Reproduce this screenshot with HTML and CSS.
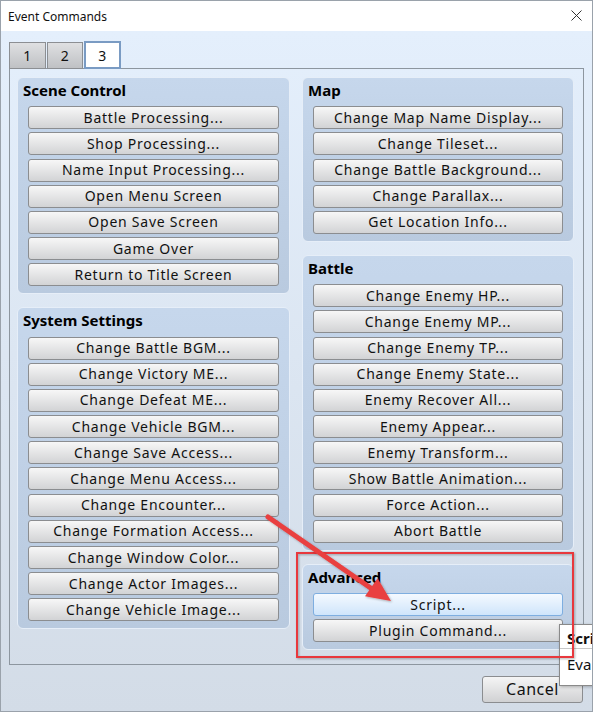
FILE: index.html
```html
<!DOCTYPE html>
<html>

<head>
    <link rel="stylesheet" href="styles.css">
</head>

<body>
    <div class="window">
        <div class="titlebar">
            <span class="title">Event Commands</span>
            <svg class="close" width="11" height="11" viewBox="0 0 11 11">
                <path d="M0.5 0.5 L10.5 10.5 M10.5 0.5 L0.5 10.5" stroke="#333" stroke-width="1" fill="none" />
            </svg>
        </div>

        <div class="client">
            <div class="tabs">
                <div class="tab">1</div>
                <div class="tab">2</div>
                <div class="tab active">3</div>
            </div>

            <div class="panel">
                <div class="column">
                    <div class="group">
                        <div class="group-title">Scene Control</div>
                        <button class="cmd">Battle Processing...</button>
                        <button class="cmd">Shop Processing...</button>
                        <button class="cmd">Name Input Processing...</button>
                        <button class="cmd">Open Menu Screen</button>
                        <button class="cmd">Open Save Screen</button>
                        <button class="cmd">Game Over</button>
                        <button class="cmd">Return to Title Screen</button>
                    </div>
                    <div class="group">
                        <div class="group-title">System Settings</div>
                        <button class="cmd">Change Battle BGM...</button>
                        <button class="cmd">Change Victory ME...</button>
                        <button class="cmd">Change Defeat ME...</button>
                        <button class="cmd">Change Vehicle BGM...</button>
                        <button class="cmd">Change Save Access...</button>
                        <button class="cmd">Change Menu Access...</button>
                        <button class="cmd">Change Encounter...</button>
                        <button class="cmd">Change Formation Access...</button>
                        <button class="cmd">Change Window Color...</button>
                        <button class="cmd">Change Actor Images...</button>
                        <button class="cmd">Change Vehicle Image...</button>
                    </div>
                </div>

                <div class="column right">
                    <div class="group">
                        <div class="group-title">Map</div>
                        <button class="cmd">Change Map Name Display...</button>
                        <button class="cmd">Change Tileset...</button>
                        <button class="cmd">Change Battle Background...</button>
                        <button class="cmd">Change Parallax...</button>
                        <button class="cmd">Get Location Info...</button>
                    </div>
                    <div class="group">
                        <div class="group-title">Battle</div>
                        <button class="cmd">Change Enemy HP...</button>
                        <button class="cmd">Change Enemy MP...</button>
                        <button class="cmd">Change Enemy TP...</button>
                        <button class="cmd">Change Enemy State...</button>
                        <button class="cmd">Enemy Recover All...</button>
                        <button class="cmd">Enemy Appear...</button>
                        <button class="cmd">Enemy Transform...</button>
                        <button class="cmd">Show Battle Animation...</button>
                        <button class="cmd">Force Action...</button>
                        <button class="cmd">Abort Battle</button>
                    </div>
                    <div class="group">
                        <div class="group-title">Advanced</div>
                        <button class="cmd hover">Script...</button>
                        <button class="cmd">Plugin Command...</button>
                    </div>
                </div>
            </div>

            <div class="footer">
                <button class="cancel">Cancel</button>
            </div>
        </div>

        <div class="tooltip">
            <div class="tip-head">Script</div>
            <div class="tip-body">Evaluates a script.</div>
        </div>

        <svg class="marks" width="593" height="712" viewBox="0 0 593 712">
            <defs>
                <filter id="soft" x="-10%" y="-10%" width="120%" height="120%">
                    <feDropShadow dx="1" dy="1" stdDeviation="1" flood-color="#000" flood-opacity="0.3" />
                </filter>
            </defs>
            <rect x="297" y="553" width="276" height="104" fill="none" stroke="#e8383d" stroke-width="2" filter="url(#soft)" />
            <g filter="url(#soft)">
                <line x1="268" y1="517" x2="375" y2="591" stroke="#e9403f" stroke-width="5" stroke-linecap="round" />
                <polygon points="391,601 365,596.3 377.6,578.3" fill="#e9403f" />
            </g>
        </svg>
    </div>
</body>

</html>
```

FILE: styles.css
```css
html, body {
    margin: 0;
    width: 593px;
    height: 712px;
    overflow: hidden;
}

body {
    font-family: "Noto Sans", "DejaVu Sans", sans-serif;
    color: #111;
}

.window {
    position: relative;
    width: 593px;
    height: 712px;
    box-sizing: border-box;
    border: 1px solid #9aa2ab;
    display: flex;
    flex-direction: column;
    overflow: hidden;
}

.titlebar {
    height: 30px;
    background-color: white;
    display: flex;
    align-items: center;
    justify-content: space-between;
    padding: 0 10px 0 7px;
    flex-shrink: 0;
}

.title {
    font-size: 12px;
    color: #111;
}

.close {
    margin-top: -2px;
}

.client {
    flex: 1;
    background: linear-gradient(#e4effc, #d3dce7);
    padding: 10px 8px 0 8px;
}

.tabs {
    display: flex;
    align-items: flex-end;
    gap: 1px;
    height: 28px;
    margin-bottom: -1px;
}

.tab {
    position: relative;
    z-index: 1;
    box-sizing: border-box;
    width: 36px;
    height: 27px;
    border: 1px solid #8c8f93;
    background: linear-gradient(#dfe0e2, #bfc1c4);
    font-size: 14px;
    letter-spacing: 0.5px;
    display: flex;
    align-items: center;
    justify-content: center;
}

.tab:first-child {
    width: 37px;
}

.tab.active {
    width: 37px;
    height: 28px;
    background: white;
    border: 2px solid #7a9bc3;
}

.panel {
    height: 597px;
    box-sizing: border-box;
    border: 1px solid #8d969f;
    padding: 8px 9px 0 7px;
    display: flex;
    gap: 12px;
}

.column {
    width: 273px;
    display: flex;
    flex-direction: column;
    gap: 13px;
}

.column.right {
    width: 272px;
}

.group {
    border: 1px solid #e6eef8;
    border-radius: 6px;
    background: linear-gradient(#c6d7ec, #b9cadf);
    padding: 0 10px 7px 10px;
    display: flex;
    flex-direction: column;
    gap: 3.2px;
}

.group-title {
    height: 25px;
    line-height: 24px;
    margin-left: -5px;
    font-size: 15px;
    font-weight: bold;
    color: #000;
}

.cmd {
    height: 23px;
    padding: 0 0 1px 0;
    border: 1px solid #8b8d90;
    border-radius: 3px;
    background: linear-gradient(#f7f7f7, #d2d3d5);
    font-family: "Noto Sans", "DejaVu Sans", sans-serif;
    font-size: 14px;
    letter-spacing: 0.75px;
    color: #111;
    cursor: pointer;
}

.cmd.hover {
    border-color: #7eaee0;
    background: linear-gradient(#f4f9ff, #cfe5fb);
}

.footer {
    display: flex;
    justify-content: flex-end;
    padding: 11px 1px 0 0;
}

.cancel {
    width: 101px;
    height: 27px;
    padding: 0 0 1px 0;
    border: 1px solid #8b8d90;
    border-radius: 3px;
    background: linear-gradient(#f5f5f5, #d0d1d3);
    font-family: "Noto Sans", "DejaVu Sans", sans-serif;
    font-size: 16px;
    letter-spacing: 0.5px;
    color: #111;
}

.tooltip {
    position: absolute;
    left: 558px;
    top: 623px;
    width: 140px;
    height: 62px;
    box-sizing: border-box;
    border: 1px solid #8a8a8a;
    background: white;
    box-shadow: 1px 1px 3px rgba(0, 0, 0, 0.25);
    white-space: nowrap;
}

.tip-head {
    height: 23px;
    line-height: 27px;
    padding-left: 7px;
    font-size: 15px;
    font-weight: bold;
    border-bottom: 1px solid #c8c8c8;
}

.tip-body {
    line-height: 30px;
    padding-left: 7px;
    font-size: 15px;
}

.marks {
    position: absolute;
    left: -1px;
    top: -1px;
    pointer-events: none;
}
```
